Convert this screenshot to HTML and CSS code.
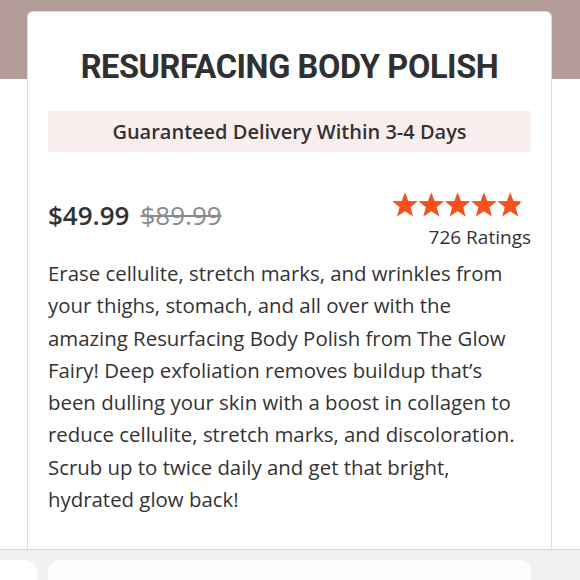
FILE: index.html
```html
<!DOCTYPE html>
<html>
<head>
<meta charset="utf-8">
<link rel="stylesheet" href="styles.css">
</head>
<body>
<div class="page">
  <div class="band"></div>
  <div class="card">
    <h1 class="title">RESURFACING BODY POLISH</h1>
    <div class="delivery">Guaranteed Delivery Within 3-4 Days</div>
    <div class="price-row">
      <div class="prices">
        <span class="price">$49.99</span>
        <span class="old">$89.99</span>
      </div>
      <div class="rating">
        <div class="stars">
          <svg width="134" height="26" viewBox="0 0 134 26">
            <defs>
              <path id="s" d="M13 0.3 L16.3 9 L25.8 9.3 L18.4 15.2 L21 24.6 L13 19.2 L5 24.6 L7.6 15.2 L0.2 9.3 L9.7 9 Z"/>
            </defs>
            <g fill="#f4511e">
              <use href="#s" x="0"/>
              <use href="#s" x="26.3"/>
              <use href="#s" x="52.6"/>
              <use href="#s" x="78.9"/>
              <use href="#s" x="105.2"/>
            </g>
            <rect x="128" y="8" width="6" height="3" fill="#ffffff" opacity="0.6"/>
          </svg>
        </div>
        <div class="count">726 Ratings</div>
      </div>
    </div>
    <p class="desc">Erase cellulite, stretch marks, and wrinkles from your thighs, stomach, and all over with the amazing Resurfacing Body Polish from The Glow Fairy! Deep exfoliation removes buildup that’s been dulling your skin with a boost in collagen to reduce cellulite, stretch marks, and discoloration. Scrub up to twice daily and get that bright, hydrated glow back!</p>
  </div>
  <div class="tray">
    <div class="tile tile-left"></div>
    <div class="tile tile-main"></div>
  </div>
</div>
</body>
</html>
```

FILE: styles.css
```css
html, body {
  margin: 0;
  padding: 0;
  background: #ffffff;
}
.page {
  width: 580px;
  height: 580px;
  overflow: hidden;
  display: flex;
  flex-direction: column;
  font-family: "Open Sans", "Liberation Sans", sans-serif;
  color: #333;
}
.band {
  height: 79px;
  flex: none;
  background: #b49c98;
}
.card {
  flex: none;
  margin: -68px 0 0 27px;
  width: 525px;
  height: 538px;
  box-sizing: border-box;
  background: #fff;
  border: 1px solid #dcdcdc;
  border-bottom: none;
  border-radius: 6px 6px 0 0;
  padding: 0 20px 0 20px;
  display: flex;
  flex-direction: column;
}
.title {
  margin: 39px 0 0;
  text-align: center;
  font-family: "Roboto", "DejaVu Sans", sans-serif;
  font-weight: 700;
  font-size: 32.5px;
  line-height: 33px;
  letter-spacing: -0.4px;
  color: #303030;
}
.delivery {
  margin-top: 27px;
  height: 41px;
  background: #f9eeee;
  display: flex;
  align-items: center;
  justify-content: center;
  font-weight: 600;
  font-size: 20px;
  color: #333;
}
.price-row {
  margin-top: 39px;
  display: flex;
  justify-content: space-between;
  align-items: flex-start;
}
.prices {
  padding-top: 6px;
  display: flex;
  align-items: baseline;
  gap: 11px;
}
.price {
  font-weight: 600;
  font-size: 26px;
  color: #333;
}
.old {
  font-size: 26px;
  color: #8a8a8a;
  text-decoration: line-through;
  text-decoration-thickness: 1.5px;
}
.rating {
  display: flex;
  flex-direction: column;
  align-items: flex-end;
}
.stars {
  height: 26px;
  margin-top: 1px;
  margin-right: 5px;
}
.stars svg {
  display: block;
}
.count {
  margin-top: 6px;
  font-size: 19px;
  color: #333;
}
.desc {
  margin: 7px 0 0;
  padding-right: 4px;
  font-size: 20.4px;
  line-height: 32.3px;
  color: #333;
}
.tray {
  flex: 1;
  border-top: 1px solid #d8d6d6;
  background: #f2f0f0;
  display: flex;
  gap: 11px;
  padding-top: 10px;
}
.tile {
  background: #fff;
  border-radius: 12px 12px 0 0;
}
.tile-left {
  width: 37px;
  flex: none;
  border-radius: 0 12px 0 0;
}
.tile-main {
  width: 483px;
  flex: none;
  background: #fefcfc;
}
```
